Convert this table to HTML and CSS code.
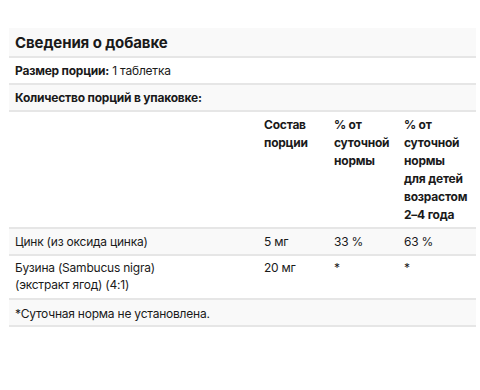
FILE: index.html
```html
<!DOCTYPE html>
<html lang="ru">
<head>
<meta charset="utf-8">
<link rel="stylesheet" href="styles.css">
</head>
<body>
<div class="facts">
  <div class="row title shaded">Сведения о добавке</div>
  <div class="row"><b>Размер порции:</b> 1 таблетка</div>
  <div class="row shaded"><b>Количество порций в упаковке:</b></div>
  <div class="grid head">
    <div></div>
    <div>Состав<br>порции</div>
    <div>% от<br>суточной<br>нормы</div>
    <div>% от<br>суточной<br>нормы<br>для детей<br>возрастом<br>2–4 года</div>
  </div>
  <div class="grid shaded">
    <div>Цинк (из оксида цинка)</div>
    <div>5 мг</div>
    <div>33 %</div>
    <div>63 %</div>
  </div>
  <div class="grid tall">
    <div>Бузина (Sambucus nigra)<br>(экстракт ягод) (4:1)</div>
    <div>20 мг</div>
    <div>*</div>
    <div>*</div>
  </div>
  <div class="row shaded note">*Суточная норма не установлена.</div>
</div>
</body>
</html>
```
FILE: styles.css
```css
html, body {
  margin: 0;
  background: #fff;
}
body {
  padding: 28px 4px 0 9px;
  font-family: Inter, "Noto Sans", sans-serif;
  font-size: 12px;
  letter-spacing: -0.22px;
  color: #1a1a1a;
}
.facts {
  width: 467px;
}
.row, .grid {
  border-bottom: 2px solid #e6e6e6;
}
.row {
  padding: 4px 6px;
  line-height: 17px;
}
.shaded {
  background: #f9f9f9;
}
.title {
  font-size: 15px;
  font-weight: 700;
  line-height: 20px;
  padding: 5px 6px 3px;
  letter-spacing: -0.1px;
}
.note {
  padding: 5px 6px 3px;
}
b {
  font-weight: 700;
}
.grid {
  display: grid;
  grid-template-columns: 249px 70px 70px 78px;
}
.grid > div {
  padding: 4px 6px;
  line-height: 17px;
}
.tall > div {
  padding-top: 3px;
  padding-bottom: 5px;
}
.head {
  font-weight: 700;
}
.head > div {
  line-height: 18px;
  white-space: nowrap;
  padding-bottom: 3px;
}
```
